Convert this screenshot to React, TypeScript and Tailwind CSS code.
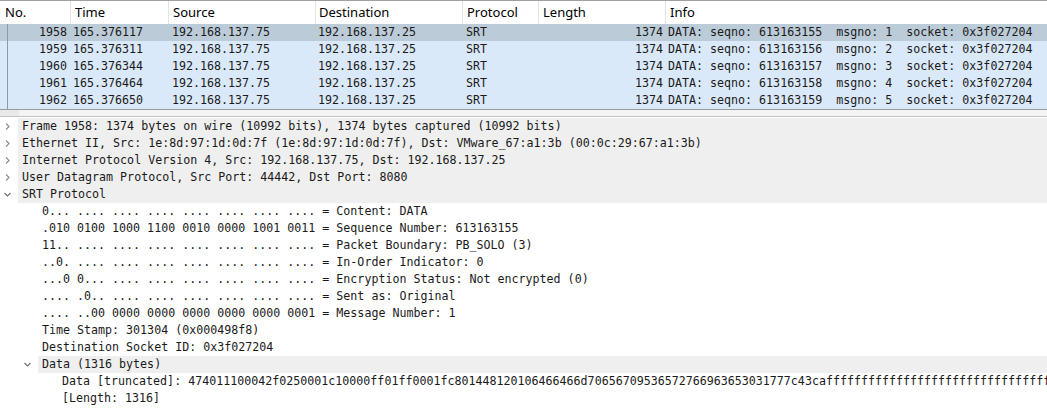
const mono = "font-['Consolas','DejaVu_Sans_Mono',monospace] text-[11.65px]"

const packets = [
  { no: "1958", time: "165.376117", seq: "613163155", msg: "1" },
  { no: "1959", time: "165.376311", seq: "613163156", msg: "2" },
  { no: "1960", time: "165.376344", seq: "613163157", msg: "3" },
  { no: "1961", time: "165.376464", seq: "613163158", msg: "4" },
  { no: "1962", time: "165.376650", seq: "613163159", msg: "5" },
]

type Row = { level: number; text: string; chevron?: "right" | "down"; shaded?: boolean }

const details: Row[] = [
  { level: 0, chevron: "right", shaded: true, text: "Frame 1958: 1374 bytes on wire (10992 bits), 1374 bytes captured (10992 bits)" },
  { level: 0, chevron: "right", shaded: true, text: "Ethernet II, Src: 1e:8d:97:1d:0d:7f (1e:8d:97:1d:0d:7f), Dst: VMware_67:a1:3b (00:0c:29:67:a1:3b)" },
  { level: 0, chevron: "right", shaded: true, text: "Internet Protocol Version 4, Src: 192.168.137.75, Dst: 192.168.137.25" },
  { level: 0, chevron: "right", shaded: true, text: "User Datagram Protocol, Src Port: 44442, Dst Port: 8080" },
  { level: 0, chevron: "down", shaded: true, text: "SRT Protocol" },
  { level: 1, text: "0... .... .... .... .... .... .... .... = Content: DATA" },
  { level: 1, text: ".010 0100 1000 1100 0010 0000 1001 0011 = Sequence Number: 613163155" },
  { level: 1, text: "11.. .... .... .... .... .... .... .... = Packet Boundary: PB_SOLO (3)" },
  { level: 1, text: "..0. .... .... .... .... .... .... .... = In-Order Indicator: 0" },
  { level: 1, text: "...0 0... .... .... .... .... .... .... = Encryption Status: Not encrypted (0)" },
  { level: 1, text: ".... .0.. .... .... .... .... .... .... = Sent as: Original" },
  { level: 1, text: ".... ..00 0000 0000 0000 0000 0000 0001 = Message Number: 1" },
  { level: 1, text: "Time Stamp: 301304 (0x000498f8)" },
  { level: 1, text: "Destination Socket ID: 0x3f027204" },
  { level: 1, chevron: "down", shaded: true, text: "Data (1316 bytes)" },
  {
    level: 2,
    text:
      "Data [truncated]: 474011100042f0250001c10000ff01ff0001fc801448120106466466d70656709536572766963653031777c43ca" +
      "fffffffffffffffffffffffffffffffffffffffffffffff",
  },
  { level: 2, text: "[Length: 1316]" },
]

function Chevron({ dir }: { dir: "right" | "down" }) {
  return (
    <svg width="9" height="9" viewBox="0 0 9 9" className="shrink-0">
      {dir === "right" ? (
        <path d="M3 1.5 L6 4.5 L3 7.5" fill="none" stroke="#8a8a8a" strokeWidth="1.1" />
      ) : (
        <path d="M1.5 3 L4.5 6 L7.5 3" fill="none" stroke="#6e6e6e" strokeWidth="1.1" />
      )}
    </svg>
  )
}

const cols = "grid grid-cols-[70px_98px_147px_147px_76px_127px_1fr]"

export default function App() {
  return (
    <div className="w-[1047px] h-[417px] overflow-hidden bg-white text-[#1a1a1a]">
      {/* PACKET LIST */}
      <div className="border-t border-[#a0a0a0]">
        <div className={`${cols} h-[23px] items-center font-['Noto_Sans',sans-serif] text-[13px] text-black`}>
          <div className="pl-[5px]">No.</div>
          <div className="h-full flex items-center pl-[4px] border-l border-[#e3e3e3]">Time</div>
          <div className="h-full flex items-center pl-[4px] border-l border-[#e3e3e3]">Source</div>
          <div className="h-full flex items-center pl-[3px] border-l border-[#e3e3e3]">Destination</div>
          <div className="h-full flex items-center pl-[4px] border-l border-[#e3e3e3]">Protocol</div>
          <div className="h-full flex items-center pl-[4px] border-l border-[#e3e3e3]">Length</div>
          <div className="h-full flex items-center pl-[4px] border-l border-[#e3e3e3]">Info</div>
        </div>
        <div className={`${mono} border-b border-[#9a9a9a]`}>
          {packets.map((p, i) => (
            <div
              key={p.no}
              className={`${cols} h-[17px] leading-[17px] whitespace-pre ${i === 0 ? "bg-[#bccbd8]" : "bg-[#dae9f9]"}`}
            >
              <div className="flex h-full">
                <div className="ml-[7px] border-l border-[#8c99a6]" />
                <div className="flex-1 text-right pr-[3px]">{p.no}</div>
              </div>
              <div className="pl-[3px]">{p.time}</div>
              <div className="pl-[4px]">192.168.137.75</div>
              <div className="pl-[3px]">192.168.137.25</div>
              <div className="pl-[4px]">SRT</div>
              <div className="text-right pr-[2px]">1374</div>
              <div className="pl-[3px] overflow-hidden">
                {`DATA: seqno: ${p.seq}  msgno: ${p.msg}  socket: 0x3f027204`}
              </div>
            </div>
          ))}
        </div>
        {/* scroll strip */}
        <div className="h-[7px] flex border-b border-[#c4c4c4]">
          <div className="w-[19px] bg-[#e9e9e9]" />
          <div className="flex-1 bg-[#f4f4f4]" />
        </div>
      </div>

      {/* PACKET DETAILS */}
      <div className={`${mono} pt-[1px]`}>
        {details.map((r, i) => (
          <div key={i} className="flex h-[17px] leading-[17px] whitespace-pre">
            <div
              className="shrink-0 flex items-center justify-center"
              style={{ width: 18 + r.level * 20 }}
            >
              {r.chevron && (
                <div className="flex w-full justify-end pr-[6px]">
                  <Chevron dir={r.chevron} />
                </div>
              )}
            </div>
            <div className={`flex-1 pl-[4px] overflow-hidden ${r.shaded ? "bg-[#efefef]" : ""}`}>{r.text}</div>
          </div>
        ))}
      </div>
    </div>
  )
}
